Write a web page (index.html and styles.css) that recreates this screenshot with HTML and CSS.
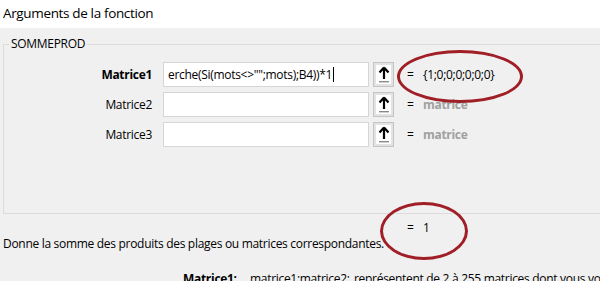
FILE: index.html
```html
<!DOCTYPE html>
<html lang="fr">
  <head>
    <meta charset="UTF-8" />
    <title>Arguments de la fonction</title>
    <link rel="stylesheet" href="styles.css">
  </head>
  <body>
    <div class="titlebar">Arguments de la fonction</div>

    <div class="dialog">
      <fieldset class="group">
        <legend>SOMMEPROD</legend>

        <div class="arg-row">
          <label class="arg-label bold">Matrice1</label>
          <div class="arg-input">erche(Si(mots&lt;&gt;"";mots);B4))*1<span class="caret"></span></div>
          <button class="ref-btn" type="button">
            <svg width="12" height="17" viewBox="0 0 12 17">
              <path d="M6 1.5 L1.5 6.5 M6 1.5 L10.5 6.5 M6 2 V13" stroke="#000" stroke-width="2.2" fill="none" />
              <rect x="1" y="15" width="10" height="1.4" fill="#8a8a8a" />
            </svg>
          </button>
          <span class="eq">=</span>
          <span class="arg-value">{1;0;0;0;0;0;0}</span>
        </div>

        <div class="arg-row">
          <label class="arg-label">Matrice2</label>
          <div class="arg-input"></div>
          <button class="ref-btn" type="button">
            <svg width="12" height="17" viewBox="0 0 12 17">
              <path d="M6 1.5 L1.5 6.5 M6 1.5 L10.5 6.5 M6 2 V13" stroke="#000" stroke-width="2.2" fill="none" />
              <rect x="1" y="15" width="10" height="1.4" fill="#8a8a8a" />
            </svg>
          </button>
          <span class="eq">=</span>
          <span class="arg-value muted">matrice</span>
        </div>

        <div class="arg-row">
          <label class="arg-label">Matrice3</label>
          <div class="arg-input"></div>
          <button class="ref-btn" type="button">
            <svg width="12" height="17" viewBox="0 0 12 17">
              <path d="M6 1.5 L1.5 6.5 M6 1.5 L10.5 6.5 M6 2 V13" stroke="#000" stroke-width="2.2" fill="none" />
              <rect x="1" y="15" width="10" height="1.4" fill="#8a8a8a" />
            </svg>
          </button>
          <span class="eq">=</span>
          <span class="arg-value muted">matrice</span>
        </div>
      </fieldset>

      <div class="result"><span class="eq">=</span><span class="result-value">1</span></div>

      <p class="desc">Donne la somme des produits des plages ou matrices correspondantes.</p>

      <p class="help"><b class="help-name">Matrice1:</b><span class="help-args">matrice1;matrice2;</span>représentent de 2 à 255 matrices dont vous voulez multiplier puis additionner les composants.</p>

      <!-- annotation circles -->
      <span class="ring ring-top"></span>
      <span class="ring ring-result"></span>
    </div>
  </body>
</html>
```

FILE: styles.css
```css
/* Base */
body {
  margin: 0;
  font-family: "Open Sans", "Noto Sans", sans-serif;
  font-size: 12px;
  letter-spacing: -0.3px;
  color: #000;
  background: #f0f0f0;
  overflow: hidden;
}

/* Title bar */
.titlebar {
  height: 28px;
  line-height: 26px;
  padding-left: 3px;
  background: #fff;
  font-size: 13.5px;
  letter-spacing: -0.35px;
}

/* Dialog body */
.dialog {
  position: relative;
  padding-top: 8px;
}

.group {
  margin: 0 -30px 0 3px;
  padding: 10px 0 61px 0;
  border: 1px solid #dcdcdc;
  border-radius: 0;
}

.group legend {
  margin-left: 5px;
  padding: 0 2px;
  line-height: 16px;
}

/* Argument rows */
.arg-row {
  display: flex;
  align-items: center;
  height: 25px;
  margin-bottom: 5px;
}

.arg-label {
  width: 148px;
  text-align: right;
}

.bold {
  font-weight: 700;
}

.arg-input {
  box-sizing: border-box;
  width: 206px;
  height: 25px;
  margin-left: 11px;
  padding: 3px 4px;
  background: #fff;
  border: 1px solid #d6d6d6;
  white-space: nowrap;
  overflow: hidden;
}

.caret {
  display: inline-block;
  width: 1px;
  height: 15px;
  margin-left: 1px;
  background: #000;
  vertical-align: -3px;
}

.ref-btn {
  box-sizing: border-box;
  width: 21px;
  height: 25px;
  margin-left: 4px;
  padding: 0;
  border: 1px solid #c4c4c4;
  background: #fff;
  box-shadow: inset 0 0 0 2px #e3e3e3;
  display: flex;
  align-items: center;
  justify-content: center;
}

.eq {
  margin-left: 13px;
  width: 16px;
}

.muted {
  color: #a0a0a0;
  font-weight: 700;
}

/* Result and description */
.result {
  display: flex;
  margin-top: 6px;
  padding-left: 394px;
  line-height: 16px;
}

.desc {
  margin: 0;
  padding-left: 3px;
  line-height: 16px;
}

.help {
  margin: 19px 0 0 183px;
  line-height: 16px;
  white-space: nowrap;
}

.help-name {
  display: inline-block;
  width: 67px;
}

.help-args {
  display: inline-block;
  width: 104px;
}

/* Red annotation circles */
.ring {
  position: absolute;
  border: 3px solid #a01f27;
  border-radius: 50%;
  box-sizing: border-box;
}

.ring-top {
  left: 397px;
  top: 22px;
  width: 126px;
  height: 53px;
}

.ring-result {
  left: 380px;
  top: 174px;
  width: 88px;
  height: 58px;
}
```
